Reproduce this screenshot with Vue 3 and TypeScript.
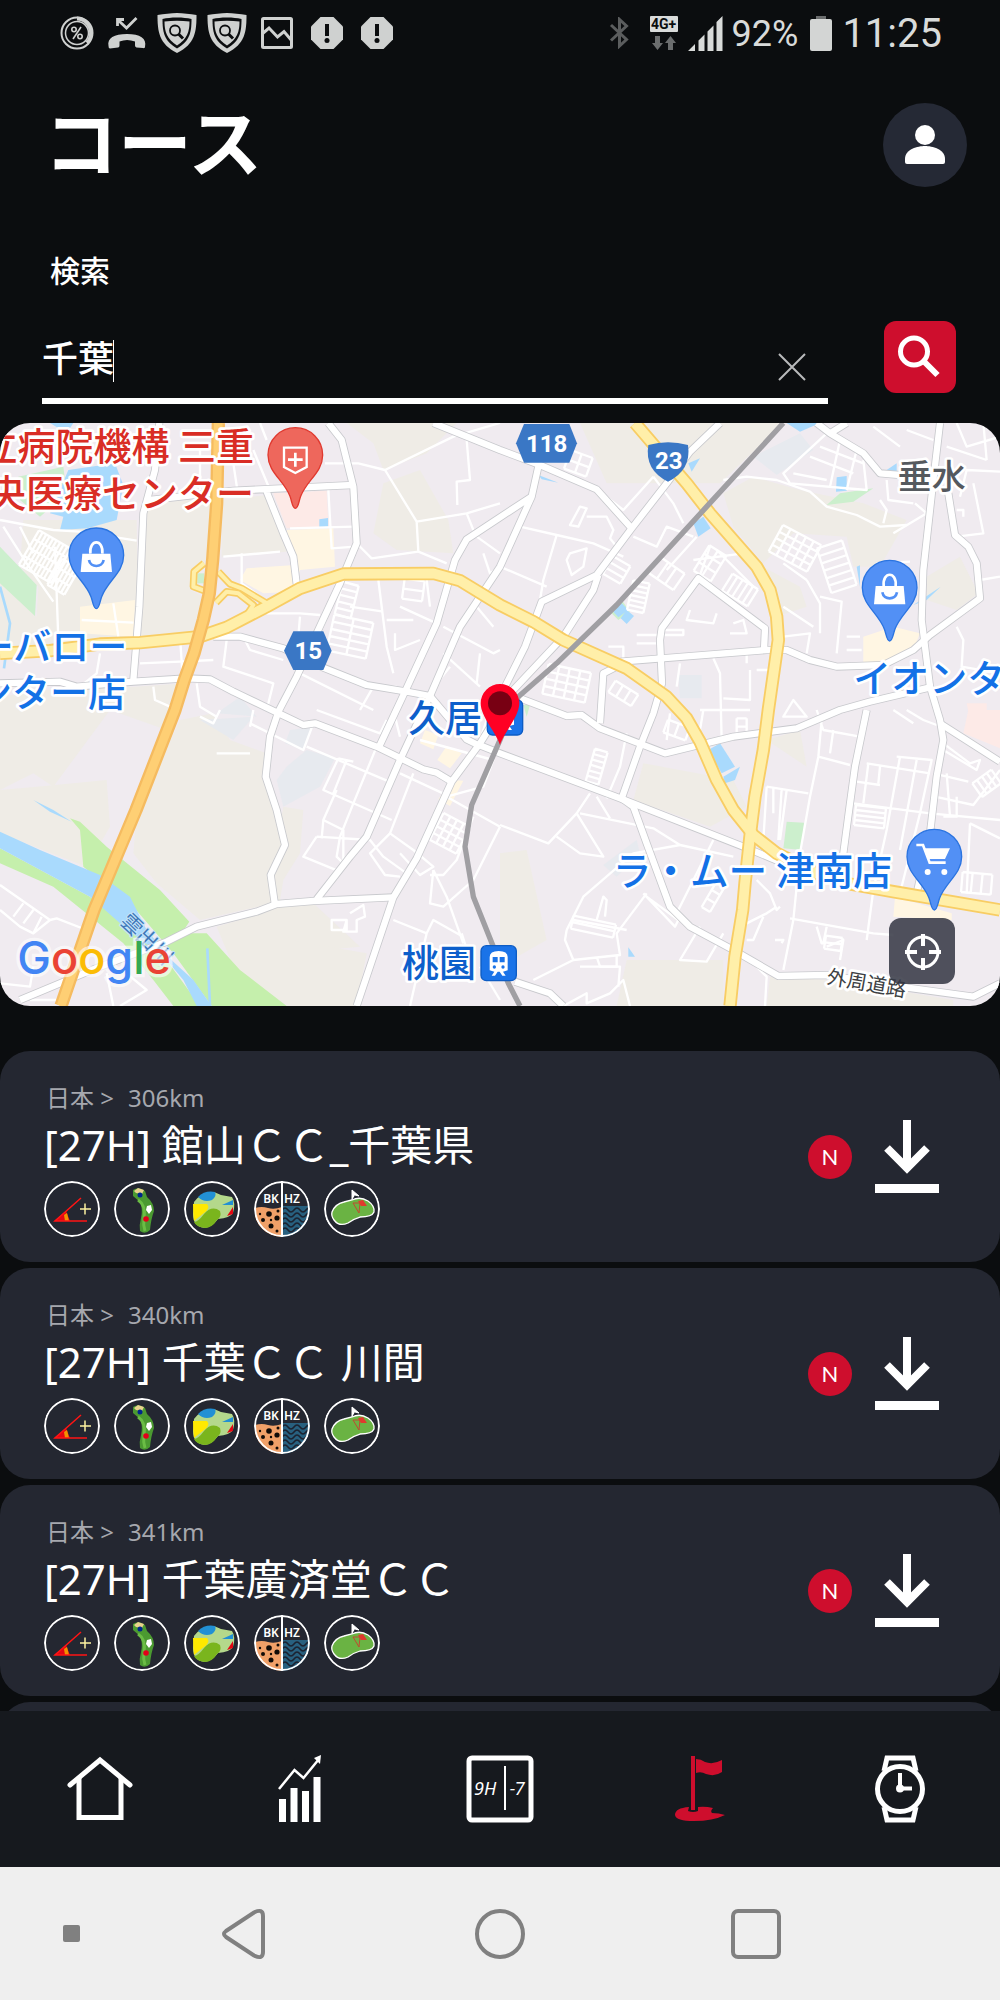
<script setup lang="ts">
import { ref } from 'vue'

interface Course {
  country: string
  distance: string
  name: string
}

interface Label {
  text: string
  x: number
  y: number
  kind: string
  size: number
  rotate?: number
  anchor?: 'start' | 'end'
}

const keyword = ref('千葉')

const courses: Course[] = [
  { country: '日本', distance: '306km', name: '[27H] 館山ＣＣ_千葉県' },
  { country: '日本', distance: '340km', name: '[27H] 千葉ＣＣ 川間' },
  { country: '日本', distance: '341km', name: '[27H] 千葉廣済堂ＣＣ' },
]

// A small block of parallel residential streets, turned around its centre.
function block(cx: number, cy: number, w: number, h: number, angle: number, cols: number, rows: number): string {
  const a = (angle * Math.PI) / 180
  const at = (x: number, y: number) =>
    `${Math.round(cx + x * Math.cos(a) - y * Math.sin(a))} ${Math.round(cy + x * Math.sin(a) + y * Math.cos(a))}`
  let d = ''
  for (let i = 0; i <= cols; i++) {
    const x = -w / 2 + (w * i) / cols
    d += `M${at(x, -h / 2)}L${at(x, h / 2)}`
  }
  for (let j = 0; j <= rows; j++) {
    const y = -h / 2 + (h * j) / rows
    d += `M${at(-w / 2, y)}L${at(w / 2, y)}`
  }
  return d
}

const fields: string[] = [
  'M70 300H410L415 660L0 700V480L110 590L115 500L60 440Z',
  'M440 250L640 235L628 420L570 450V510L610 530L590 640L420 650Z',
  'M665 240L800 225L850 350L860 395L665 410Z',
  'M1040 9H1370L1280 100L1150 150L1120 70Z',
  'M1150 190L1260 150L1345 300L1360 400L1190 390L1120 340Z',
  'M1740 9H2350L2160 190H1820Z',
  'M2170 220L2260 170L2400 210L2590 250L2720 300L2640 440H2560L2540 350L2380 340L2290 430L2200 320Z',
  'M2780 470L2880 410L2935 520L2870 570L2780 540Z',
  'M0 830L200 800L400 800L560 790L500 930L330 870L160 1100L100 1060L0 1110Z',
  'M540 900L640 880L690 960L800 1000V1080L850 1280L810 1370L820 1450L600 1500L470 1390L400 1300L410 1180Z',
  'M0 1110L110 1100L320 1080L330 1220L260 1340L0 1240Z',
  'M850 1160L910 1170L900 1300L850 1380L840 1440L940 1450L1080 1580L870 1600L780 1560Z',
  'M650 1520L820 1470L870 1560L1100 1600L1070 1758H860L700 1640Z',
  'M1500 1300L1580 1290L1640 1560L1500 1640Z',
  'M1930 1030L2200 1080L2240 1160L2130 1220L1900 1140Z',
  'M1880 1620H2170V1758H1850Z',
  'M2310 1670L2500 1680L2860 1740V1758H2300Z',
  'M2300 960L2400 930L2420 1040Z',
  'M2270 430L2400 500L2420 560L2330 590Z',
]

const parks: string[] = [
  'M55 170L190 140L200 220L120 290L60 240Z',
  'M0 380L110 495L105 588L0 490Z',
  'M2480 255L2520 220L2620 205L2560 245Z',
  'M1830 575L1865 540L1890 575L1855 600Z',
  'M2360 1205L2412 1208L2405 1290L2350 1285Z',
  'M1570 855H1590L1580 890Z',
  'M592 460H612V490H592Z',
]

const banks: string[] = [
  'M210 1195L240 1205L320 1280L480 1410L568 1505L545 1540L620 1540L720 1650L860 1758H635L520 1600L400 1460L250 1340L240 1230Z',
  'M0 1285L270 1430L500 1620L600 1758H520L460 1680L370 1570L160 1400L0 1330Z',
]

const waters: string[] = [
  'M0 1235L120 1290L300 1365L390 1430L440 1530L520 1625L580 1680L635 1758H590L550 1680L500 1620L360 1510L270 1430L0 1285Z',
  'M205 150L345 130L370 195L350 300L262 325L180 330L190 290L150 280Z',
  'M150 9H220L200 40Z',
  'M958 298L984 294V320L958 322Z',
  'M2080 310L2110 290L2132 325L2095 350Z',
  'M2360 9H2460L2400 35Z',
  'M2510 172L2540 168V212L2508 215Z',
  'M2065 130L2100 115L2075 155Z',
  'M1840 575L1865 550L1885 570L1855 592Z',
  'M1862 595L1880 570L1902 588L1880 612Z',
  'M2125 990L2160 970L2205 1040L2165 1060Z',
  'M2170 1070L2220 1040L2205 1080L2175 1090Z',
  'M1885 1582L1905 1610H1885Z',
  'M2740 555L2822 500L2780 540Z',
  'M2570 440L2580 436V500Z',
  'M2660 150L2690 130V155Z',
  'M1615 165L1675 188L1625 178Z',
  'M100 1140L160 1170L215 1205L150 1175Z',
]

const shops: string[] = [
  'M860 330L1000 325L1005 440L900 450L880 515L790 520L720 480L740 445L885 435Z',
  'M240 560L405 540L400 650L240 640Z',
  'M2590 650L2680 620L2760 640L2740 690L2650 735H2590Z',
  'M1275 930L1315 945L1300 988L1260 970Z',
  'M1340 978L1385 1000L1350 1045L1312 1020Z',
  'M1355 1080L1390 1082L1350 1158L1315 1138Z',
  'M2685 1430L2855 1480V1500L2680 1490Z',
]

const grounds: string[] = [
  'M600 900L760 890L700 960Z',
  'M870 930L940 920L910 990L855 970Z',
  'M860 1040L920 990L1005 1015L960 1100L850 1160L830 1080Z',
  'M2260 110L2400 40L2440 90L2330 165Z',
  'M2035 765H2105V835H2040Z',
  'M1810 1335L1910 1260L1920 1300L1850 1370Z',
  'M650 880L720 830L770 890Z',
]

const clinics: string[] = ['M820 220L980 212L985 320L860 325Z', 'M2905 870H3000V985L2890 940Z', 'M2900 850H2960V900H2910Z']

const streets: string[] = [
  'M0 300L160 330L240 335L410 362M10 320L80 430L160 545M60 320L100 400M165 380L175 660M245 600L400 608M340 550L355 650',
  'M300 700L290 760L240 800M540 650L548 770M420 730L540 725L640 720M460 800L465 840L510 860M590 790L600 860L650 890',
  'M670 410L840 395M725 400V490L780 530M700 130L712 210M760 90L810 210M600 90V240M780 9L800 60',
  'M975 130H1075L1155 150L1250 305L1255 395L1115 415L1075 375M1155 150L1360 50L1500 9M1250 305L1400 280L1500 250',
  'M985 210L995 385L1065 380M870 325L1060 320M1400 60L1410 180L1370 185L1372 255M1400 280L1420 330M1255 395L1340 430',
  'M1135 480L1160 680L1180 760M1050 560L1150 575M1020 500L960 640M1280 480L1290 560M1200 560L1310 610M1160 600L1240 600M1185 640V690L1260 660',
  'M800 580H900L960 585M900 590L895 650L880 700M730 650L750 690L850 720M680 660L670 740L820 790L800 870M900 760L1120 870M1120 800L1080 870M1150 800L1190 800',
  'M1330 620L1480 700L1500 690M1430 560L1480 620M1440 700L1430 790M1330 700L1440 800M1350 740L1310 790L1290 825M1430 350L1500 400M1450 400L1470 460L1500 440',
  'M1560 320L1670 345L1780 370L1870 410M1670 345L1630 480L1620 540M1500 440L1640 500M1700 420L1710 400L1760 385L1750 440L1715 465Z',
  'M1740 260L1760 265L1735 320L1710 315ZM1760 290H1820L1840 330L1830 355L1850 380M1790 208L1870 270L1960 170M1960 170L2020 250L2050 310M1900 350L1970 380L2000 320L2080 350',
  'M2170 180L2240 170L2330 180L2430 215L2480 260L2570 285L2640 320L2720 315M2000 450L2090 350M2080 420L2230 400M2150 390L2260 500M2130 380L2100 465',
  'M2630 430L2730 425M2640 240L2660 270L2650 310M2660 180L2665 240L2740 250M2880 230L2900 150L3000 155M2920 190L2950 340L2870 350M2940 480L3000 470M2745 250L2780 280L2680 340M2870 270H2890V290',
  'M2420 480L2460 550V640M2420 480L2350 430M2460 530L2525 545L2510 700M2350 560L2440 620M2350 650L2430 640L2420 700M2540 650H2580M2540 690H2585M2870 620L2890 660L2885 740L3000 760',
  'M2070 570L2060 600L2140 610L2150 580M2190 640H2240L2230 600L2200 610M1910 645H2050V630H1990M1910 670H1980M1825 680H1870V730M2040 730L2030 800',
  'M2140 715L2160 760L2165 960M2100 870H2250M2110 870L2100 930M2010 880L2000 960M2250 750V840L2170 835M2270 750L2310 750M2240 690V730',
  'M2350 890L2380 840L2420 890ZM2450 870L2470 930L2580 950M2465 900L2455 1010L2430 1130L2400 1300L2380 1500L2350 1650M2455 1010L2550 1035M2490 1000L2500 930',
  'M2300 1100L2425 1120M2300 1100L2290 1260M2320 1100V1180M2345 1105L2335 1260M2360 1110L2340 1260M2570 1085L2640 1095M2600 1030L2790 1060M2605 1030L2590 1150M2640 1040L2635 1090',
  'M2690 1010L2795 1020L2760 1180L2730 1300L2700 1420M2700 1010L2660 1230L2620 1410M2750 1020L2700 1290M2560 1150L2790 1180L3000 1200M2805 1130L2920 1155L3000 1050M2910 1210L3000 1255M2910 1210L2900 1420',
  'M2720 870L2770 900L2810 915M2830 970L2910 1030L2940 1020L2930 1050L2830 990M2680 870L2740 910M2800 1060L2905 1085M2840 1060L2850 1190M2870 1130V1190H2830',
  'M2370 1495L2620 1540L2680 1545M2450 1520L2465 1570H2470L2480 1520M2480 1580L2530 1560L2520 1620M2325 1560H2350L2345 1570M2240 1510L2300 1480L2330 1460M2270 1380L2310 1420L2330 1470L2340 1460M2290 1490L2260 1560H2240M2620 1410L2600 1560',
  'M1500 1215L1645 1270L1730 1180L1770 1120M1670 1250L1740 1300L1810 1310L1730 1180M1740 1180L1960 1225L2040 1275L2200 1310M1790 1130L1830 1195M1880 940L1860 1040L1820 1135M2140 1260L2100 1340L2030 1480',
  'M1700 1530L1750 1430L1900 1300L2040 1275M1720 1500L1880 1530M1700 1530L1695 1560L1720 1620L1860 1605L1850 1540L1940 1420M1790 1610L1800 1640H1850V1605M1930 1420L2025 1520L2035 1500L1940 1430',
  'M1790 1500L1810 1430L1820 1440L1815 1490M2100 1520L2040 1620L2120 1625L2170 1540M2270 1640L2300 1670L2295 1758M1600 1680L1720 1620M1690 1758L1760 1720V1750L1830 1720L1870 1680L1890 1758M1740 1640L1860 1640L1855 1700',
  'M650 1000H750M750 910L910 990L940 910M760 870L750 920M600 890L640 910L660 870M950 870L1140 940L1160 900M920 980L1180 1090M1180 870L1200 950M1130 980L1060 1150L1020 1250L1010 1310L1030 1330',
  'M1015 1015L970 1110L1175 1200M1015 1015L1060 1025M1010 1110L970 1200L965 1255M1000 1120L1040 1020M1200 1060L1350 1130M1240 1060L1170 1240L1240 1290L1300 1340L1260 1365L1200 1300',
  'M950 1250L1110 1260L1150 1310L1220 1360M950 1250L910 1310L1020 1355M1170 1240L1110 1300L1155 1365L1200 1370M970 1200L1030 1230V1320M1260 960L1480 1020L1450 1100L1340 1130L1500 1220M1470 870L1440 960',
  'M1290 1365H1330L1370 1320L1420 1190M1300 1350L1340 1430L1390 1570M1300 1350L1290 1450L1330 1460L1420 1380L1500 1220M1180 1500L1280 1540L1300 1500L1380 1545M1280 1540L1230 1758M1440 1640L1500 1740',
  'M995 1500H1040V1530H995ZM1050 1480L1090 1455L1095 1490L1070 1500V1535H1030L1040 1500M1385 1540L1420 1650',
  'M0 1395L150 1500L170 1495L260 1530M0 1470L60 1520L100 1540L150 1500M40 1490L70 1450M70 1510L100 1470M100 1540L125 1490M0 1690L90 1700L100 1640M320 1660L340 1758M90 1740H180M360 1758L440 1710L380 1660',
  'M2480 40L2350 160L2370 190L2600 210L2590 120M2380 160L2480 180M2430 110L2560 160M2460 80L2590 130M2490 200L2520 60M2540 210L2570 90M2620 20L2700 80M2800 60L2720 30M2840 80L2960 120M2870 9L2900 80L3000 50M2950 9L2960 120',
  block(135, 410, 110, 120, 30, 9, 4),
  block(190, 470, 60, 90, 30, 5, 3),
  block(1050, 650, 120, 110, 12, 2, 5),
  block(1040, 540, 50, 100, 14, 1, 5),
  block(1240, 510, 60, 60, 8, 1, 2),
  block(1735, 130, 70, 60, 20, 2, 2),
  block(2385, 385, 130, 90, 28, 5, 4),
  block(2510, 440, 80, 140, -18, 1, 6),
  block(2220, 510, 90, 60, 32, 5, 1),
  block(2130, 430, 60, 90, 32, 2, 3),
  block(1915, 530, 50, 90, 12, 1, 6),
  block(2000, 460, 90, 60, 35, 3, 1),
  block(1850, 450, 60, 60, 30, 1, 3),
  block(1700, 790, 130, 90, 12, 4, 4),
  block(1870, 820, 80, 40, 32, 3, 1),
  block(1790, 1040, 40, 100, 16, 1, 6),
  block(2140, 1430, 30, 90, 30, 1, 3),
  block(2610, 1190, 90, 60, 6, 1, 4),
  block(1350, 1240, 90, 90, 28, 4, 4),
  block(1780, 1520, 130, 40, 12, 1, 2),
  block(2225, 920, 30, 50, 0, 1, 2),
  block(2030, 930, 70, 40, 20, 2, 1),
  block(2500, 1570, 50, 40, 8, 1, 2),
  block(2960, 1090, 70, 50, -35, 4, 1),
  block(2930, 1390, 90, 60, 5, 3, 1),
]

const mainRoads: string[] = [
  'M478 9L465 150L430 280L418 560L400 780',
  'M0 790L180 785L230 800L400 785L560 775L630 778L700 815L830 877L910 915L945 910L1130 980L1270 1048L1310 1058L1355 1085',
  'M640 650H720L850 685L975 745L1100 795L1220 815L1290 828L1400 958L1440 978',
  'M450 240L700 212L1060 195M800 215L850 340L880 410L890 492',
  'M985 9L1025 60L1060 200L1070 370L1020 490L950 640L890 770L835 875L810 950L797 1070L830 1170L855 1275L812 1365L825 1455',
  'M1300 9L1500 90L1620 135L1790 208L1895 325',
  'M1615 140L1595 230L1500 440L1380 620L1290 828L1200 1020L1100 1250L1050 1310L950 1438',
  'M1595 230L1500 292L1400 358L1365 420L1310 610L1215 815L1135 985',
  'M2160 9L2070 95L2000 190L1895 325L1790 465L1625 545L1575 680L1515 800',
  'M1795 465L1780 510L1690 650L1540 810L1440 970L1355 1085L1250 1315L1180 1432L1070 1758',
  'M1430 972L1500 1000L1860 1135L2230 1280L2350 1330',
  'M60 1740L300 1640L500 1565L590 1520L770 1475L830 1452L940 1443L1180 1432',
  'M1560 835L1700 888L1745 885L1800 925L1995 1000L2200 950L2390 925L2520 870L2610 845L2800 800',
  'M2292 690L2295 625L2095 475L1985 625L1980 660L1986 790L1960 880L1920 980L1865 1135L1900 1160L1940 1270L2010 1460L2070 1520L2200 1590L2335 1668L2480 1665L2700 1700L2920 1730L3000 1690',
  'M1860 725L2300 690H2360L2430 720L2510 740L2650 735L2740 690L2790 645L2940 535L2930 430L2905 380L2865 345L2845 220',
  'M2820 9L2800 180L2770 450L2765 600L2790 800L2820 900L2830 960L2810 1070L2790 1240L2750 1420',
  'M2450 9L2490 40L2590 100L2640 160L2700 165M2490 40L2540 9',
  'M2600 870L2565 1040L2550 1150L2530 1300M2820 910L3000 1025',
  'M1800 910L1810 760L1860 735M1545 1685L1650 1720L1690 1758',
]

const yellowRoads: string[] = [
  'M0 700L150 692L300 672L420 668L600 650L680 622L800 560L900 505L1030 462L1300 460L1380 482L1500 555L1600 605L1690 660L1880 745L2000 830L2060 895L2100 965L2150 1080L2200 1170L2260 1245L2330 1300L2450 1360L2550 1392L2680 1415L3000 1470',
  'M1905 9L2060 190L2130 280L2270 440L2310 510L2330 590L2335 660L2305 870L2290 990L2265 1130L2250 1250L2235 1390L2228 1470L2205 1610L2190 1758',
]

const ramps: string[] = ['M612 430L582 455L580 500L612 512', 'M655 455L690 492L725 505L800 550', 'M648 548L680 515L715 520L760 555L740 585L640 635']

const highway = 'M655 9L650 250L638 420L628 520L610 600L582 700L553 780L525 870L408 1170L282 1470L183 1758'
const railway = 'M2350 9L2120 260L1850 555L1670 730L1555 830L1500 960L1415 1155L1395 1280L1420 1430L1480 1580L1525 1690L1560 1758'
const pinShape =
  'M0 160C-9 160-10 140-16 124C-34 76-82 52-82 0A82 82 0 1 1 82 0C82 52 34 76 16 124C10 140 9 160 0 160Z'

const labels: Label[] = [
  { text: '立病院機構 三重', x: 762, y: 121, kind: 'red', size: 114, anchor: 'end' },
  { text: '央医療センター', x: 762, y: 261, kind: 'red', size: 114, anchor: 'end' },
  { text: 'ーバロー', x: 382, y: 720, kind: 'blue', size: 114, anchor: 'end' },
  { text: 'ンター店', x: 378, y: 859, kind: 'blue', size: 114, anchor: 'end' },
  { text: '久居', x: 1224, y: 937, kind: 'navy', size: 111 },
  { text: '桃園', x: 1206, y: 1672, kind: 'navy', size: 111 },
  { text: '垂水', x: 2693, y: 206, kind: 'grey', size: 102 },
  { text: 'イオンタ', x: 2560, y: 817, kind: 'blue', size: 114 },
  { text: 'ラ・ムー 津南店', x: 1838, y: 1395, kind: 'blue', size: 116 },
  { text: '外周道路', x: 2478, y: 1690, kind: 'dark', size: 60, rotate: 10 },
  { text: '雲出川', x: 358, y: 1508, kind: 'river', size: 63, rotate: 44 },
]
</script>

<template>
  <div class="app">
    <div class="status">
      <div class="status-left">
        <svg class="s-icon" viewBox="0 0 42 42">
          <circle cx="21" cy="21" r="15.500" fill="none" stroke="#cfd1d0" stroke-width="2" />
          <path d="M21 6.500A14.500 14.500 0 0 1 31 31" fill="none" stroke="#cfd1d0" stroke-width="4" />
          <circle cx="21" cy="21" r="11.500" fill="none" stroke="#cfd1d0" stroke-width="1.500" />
          <circle cx="18" cy="17.500" r="2.200" fill="none" stroke="#cfd1d0" stroke-width="1.600" />
          <circle cx="24" cy="24.500" r="2.200" fill="none" stroke="#cfd1d0" stroke-width="1.600" />
          <path d="M25 15L17 27" stroke="#cfd1d0" stroke-width="1.600" />
        </svg>
        <svg class="s-icon" viewBox="0 0 42 42">
          <path d="M11.500 14V7.500H18M12.500 8.500L20.500 16L30.500 6" fill="none" stroke="#cfd1d0" stroke-width="2.800" />
          <path d="M2.500 34C1 26 8 22 21 22S41 26 39 35Q39 36.500 37 36L30.500 35.500Q29 35 29 33.500V29.500Q21 26.500 13.500 29.500V33.500Q13.500 35.500 12 35.500L4 36.500Q2.500 36.500 2.500 34Z" fill="#cfd1d0" />
        </svg>
        <svg v-for="n in 2" :key="n" class="s-icon" viewBox="0 0 42 42">
          <path d="M21 1C15 1 8 2 1.500 3C1.500 20 3 32 21 41C39 32 40.500 20 40.500 3C34 2 27 1 21 1Z" fill="#cfd1d0" />
          <path d="M21 5.500C15 5.500 11 6 6.500 7C6.500 20 8 29 21 36.500C34 29 35.500 20 35.500 7C31 6 27 5.500 21 5.500Z" fill="#0b0d0f" />
          <path d="M8.500 9.500Q21 8 33.500 9.500C33.500 20 31 27 21 33.500C11 27 8.500 20 8.500 9.500Z" fill="#cfd1d0" />
          <circle cx="19" cy="18.500" r="5" fill="none" stroke="#0b0d0f" stroke-width="1.800" />
          <path d="M22.500 22L27 26.500" stroke="#0b0d0f" stroke-width="3" />
        </svg>
        <svg class="s-icon" viewBox="0 0 42 42">
          <rect x="6.500" y="6.500" width="29" height="29" rx="1" fill="none" stroke="#cfd1d0" stroke-width="3" />
          <path d="M6 22L13 16L21.500 25L28 19.500L36 29" fill="none" stroke="#cfd1d0" stroke-width="3" />
        </svg>
        <svg v-for="n in 2" :key="'a' + n" class="s-icon" viewBox="0 0 42 42">
          <path d="M14.500 5H27.500L37 14.500V27.500L27.500 37H14.500L5 27.500V14.500Z" fill="#cfd1d0" />
          <path d="M19 12H23V24H19Z" fill="#0b0d0f" />
          <circle cx="21" cy="28.500" r="2.500" fill="#0b0d0f" />
        </svg>
      </div>
      <div class="status-right">
        <svg class="bt" viewBox="0 0 20 32">
          <path d="M2 8L17.500 22.500L10.500 29V2.500L17.500 9L2 23.500" fill="none" stroke="#5b5d5e" stroke-width="3" />
        </svg>
        <div class="net">
          <span class="net-tag">4G+</span>
          <svg class="net-arrows" viewBox="0 0 28 14">
            <path d="M5 0H10V7H13L7.500 14L2 7H5Z" fill="#6b6d6e" />
            <path d="M18 14H23V7H26L20.500 0L15 7H18Z" fill="#6b6d6e" />
          </svg>
        </div>
        <svg class="signal" viewBox="0 0 36 36">
          <path d="M0 36L7 29V36ZM10.500 25.500L16.500 19.500V36H10.500ZM19.500 16.500L25.500 10.500V36H19.500ZM28.500 7L34.500 1V36H28.500Z" fill="#d9dbda" />
        </svg>
        <span class="percent">92%</span>
        <svg class="battery" viewBox="0 0 22 36">
          <path d="M6 1H16V5H6Z" fill="#6b6d6e" />
          <rect y="4" width="22" height="32" rx="2" fill="#d3d5d4" />
        </svg>
        <span class="clock">11:25</span>
      </div>
    </div>

    <header class="header">
      <h1>コース</h1>
      <button class="avatar" type="button" aria-label="プロフィール">
        <svg viewBox="0 0 84 84">
          <circle cx="42" cy="32" r="10" fill="#fff" />
          <path d="M22 56C22 46 35 43 42 43S62 46 62 56V59Q62 61 60 61H24Q22 61 22 59Z" fill="#fff" />
        </svg>
      </button>
    </header>

    <form class="search" @submit.prevent>
      <label for="keyword">検索</label>
      <div class="search-row">
        <div class="field">
          <input id="keyword" v-model="keyword" type="text" autocomplete="off" />
          <span class="caret"></span>
          <button class="clear" type="button" aria-label="クリア">
            <svg viewBox="0 0 28 28"><path d="M1 1L27 27M27 1L1 27" stroke="#b9babb" stroke-width="2" /></svg>
          </button>
        </div>
        <button class="go" type="submit" aria-label="検索する">
          <svg viewBox="0 0 72 72">
            <circle cx="30" cy="30.500" r="13.500" fill="none" stroke="#fff" stroke-width="5" />
            <path d="M39.500 40L53.500 54" stroke="#fff" stroke-width="6" />
          </svg>
        </button>
      </div>
    </form>

    <section class="map">
      <svg class="map-canvas" viewBox="0 9 3000 1749" preserveAspectRatio="xMidYMid slice">
        <rect x="0" y="0" width="3000" height="1760" fill="#f0ebf0" />
        <path v-for="(d, i) in fields" :key="'f' + i" :d="d" fill="#efece6" />
        <path v-for="(d, i) in grounds" :key="'g' + i" :d="d" fill="#e7eaef" />
        <path v-for="(d, i) in shops" :key="'s' + i" :d="d" fill="#fff6e3" />
        <path v-for="(d, i) in clinics" :key="'c' + i" :d="d" fill="#fdeae7" />
        <path v-for="(d, i) in parks" :key="'p' + i" :d="d" fill="#ccefcd" />
        <path v-for="(d, i) in banks" :key="'b' + i" :d="d" fill="#c5efac" />
        <path v-for="(d, i) in waters" :key="'w' + i" :d="d" fill="#a9dafd" />
        <path d="M0 500L30 610L12 745M622 1585L630 1758" class="line brook" />
        <path v-for="(d, i) in streets" :key="'m' + i" :d="d" class="line street" />
        <path v-for="(d, i) in mainRoads" :key="'rc' + i" :d="d" class="line road-edge" />
        <path v-for="(d, i) in mainRoads" :key="'r' + i" :d="d" class="line road" />
        <path v-for="(d, i) in ramps" :key="'jc' + i" :d="d" class="line ramp-edge" />
        <path v-for="(d, i) in yellowRoads" :key="'yc' + i" :d="d" class="line yellow-edge" />
        <path v-for="(d, i) in yellowRoads" :key="'y' + i" :d="d" class="line yellow" />
        <path v-for="(d, i) in ramps" :key="'j' + i" :d="d" class="line ramp" />
        <path :d="highway" class="line highway-edge" />
        <path :d="highway" class="line highway" />
        <path :d="railway" class="line rail" />

        <g fill="#3a77c5">
          <path d="M1572 12H1708L1731 70L1708 128H1572L1548 70Z" />
          <path d="M880 634H970L995 692L970 750H880L852 692Z" />
          <path d="M1945 75Q2004 58 2064 75Q2075 150 2004 185Q1933 150 1945 75Z" />
        </g>
        <g class="shield">
          <text x="1640" y="96">118</text>
          <text x="925" y="718">15</text>
          <text x="2006" y="147">23</text>
        </g>

        <g class="labels">
          <text
            v-for="l in labels"
            :key="l.text"
            :class="l.kind"
            :x="l.x"
            :y="l.y"
            :font-size="l.size"
            :text-anchor="l.anchor ?? 'start'"
            :transform="l.rotate ? `rotate(${l.rotate} ${l.x} ${l.y})` : undefined"
          >{{ l.text }}</text>
        </g>

        <g transform="translate(886 105)">
          <path :d="pinShape" fill="#ee675c" stroke="#e0392f" stroke-width="4" />
          <path d="M-34-22H34V36L0 54L-34 36Z" fill="none" stroke="#fff" stroke-width="7" />
          <path d="M-22 14H22M0-7V35" stroke="#fff" stroke-width="8" />
        </g>
        <g v-for="p in [[289, 406], [2669, 503]]" :key="p[0]" :transform="`translate(${p[0]} ${p[1]})`">
          <path :d="pinShape" fill="#5290f5" stroke="#2b74e0" stroke-width="4" />
          <path d="M-42-5H42L47 50H-47Z" fill="#fff" />
          <path d="M-18-5C-22-50 22-50 18-5" fill="none" stroke="#fff" stroke-width="8" />
          <path d="M-22 14C-18 38 18 38 22 14" fill="none" stroke="#5290f5" stroke-width="8" />
        </g>
        <g transform="translate(2803 1310)">
          <path :d="pinShape" fill="#5290f5" stroke="#2b74e0" stroke-width="4" />
          <path d="M-54-35H-34L-14 18H34" fill="none" stroke="#fff" stroke-width="8" />
          <path d="M-32-25H47L32 7H-18Z" fill="#fff" />
          <circle cx="-20" cy="46" r="9" fill="#fff" />
          <circle cx="30" cy="46" r="9" fill="#fff" />
        </g>
        <g v-for="p in [[1462, 840], [1443, 1577]]" :key="'st' + p[0]" :transform="`translate(${p[0]} ${p[1]})`">
          <rect width="106" height="105" rx="16" fill="#1a73e8" stroke="#0d5cc4" stroke-width="4" />
          <path d="M26 74V34Q26 16 53 16T80 34V74L66 78L74 90H64L56 78H50L42 90H32L40 78Z" fill="#fff" />
          <path d="M35 34H50V50H35ZM56 34H71V50H56Z" fill="#1a73e8" />
          <circle cx="40" cy="64" r="5" fill="#1a73e8" />
          <circle cx="66" cy="64" r="5" fill="#1a73e8" />
        </g>
        <path d="M1500 975C1490 940 1442 890 1442 850A58 58 0 0 1 1558 850C1558 890 1510 940 1500 975Z" fill="#ff0024" />
        <circle cx="1500" cy="850" r="36" fill="#780013" />
        <text class="brand" x="52" y="1662"><tspan fill="#4285f4">G</tspan><tspan fill="#ea4335">o</tspan><tspan fill="#fbbc05">o</tspan><tspan fill="#4285f4">g</tspan><tspan fill="#34a853">l</tspan><tspan fill="#ea4335">e</tspan></text>
      </svg>
      <button class="locate" type="button" aria-label="現在地">
        <svg viewBox="0 0 66 66">
          <circle cx="34" cy="34" r="15" fill="none" stroke="#fff" stroke-width="3" />
          <path d="M34 16V28M34 40V52M16 34H28M40 34H52" stroke="#fff" stroke-width="4" />
        </svg>
      </button>
    </section>

    <main class="list">
      <article v-for="c in courses" :key="c.name" class="card">
        <div class="info">
          <p class="where"><span>{{ c.country }} &gt;</span><span>{{ c.distance }}</span></p>
          <h2>{{ c.name }}</h2>
          <div class="features">
            <svg viewBox="0 0 56 56">
              <path d="M10 40L22 30L26 40Z" fill="#e30613" />
              <path d="M20 34L23 32L25 40H21Z" fill="#f39200" />
              <path d="M37 17L11 40H43" fill="none" stroke="#ff1414" stroke-width="1.500" />
              <path d="M41 22.500V33.500M36 28H47" stroke="#fdf3a0" stroke-width="1.500" />
              <circle cx="28" cy="28" r="27" class="ring" />
            </svg>
            <svg viewBox="0 0 56 56">
              <path d="M19 9Q25 5 31 10L33 16Q40 22 40 30Q37 38 36 49Q31 54 26 50Q25 44 27 37Q29 28 26 21L19 15Z" fill="#4b9a31" />
              <path d="M24 19Q32 24 30 37Q29 44 31 50" fill="none" stroke="#6bbd45" stroke-width="3" />
              <path d="M20 10L24 7L30 9L28 13L22 12Z" fill="#e9d28d" />
              <path d="M33 25L37 24L38 29L35 33L32 29Z" fill="#fff" />
              <circle cx="26" cy="14" r="2.500" fill="#00268c" />
              <circle cx="32" cy="38" r="2.800" fill="#e2001a" />
              <circle cx="28" cy="28" r="27" class="ring" />
            </svg>
            <svg viewBox="0 0 56 56">
              <path d="M10 21Q16 12 30 11L37 14L48 16Q52 22 49 32Q46 37 34 38Q28 46 21 47Q9 46 9 33Z" fill="#b4d88b" />
              <path d="M14 16Q21 9 31 11Q33 15 28 19Q20 22 14 16Z" fill="#2290d4" />
              <path d="M9 23H23Q27 27 20 32L10 40Q9 32 9 23Z" fill="#ffe900" />
              <path d="M10 41Q14 41 20 33Q28 24 36 30Q38 36 33 39Q28 47 21 47Q12 46 10 41Z" fill="#7ab51d" />
              <path d="M38 24L49 19V24H41Z" fill="#2290d4" />
              <path d="M43 35L49 26V33Z" fill="#e30613" />
              <circle cx="28" cy="28" r="27" class="ring" />
            </svg>
            <svg viewBox="0 0 56 56">
              <path d="M1 27Q8 25 14 27T28 26V56H1Z" fill="#f0a068" />
              <g fill="#100b08">
                <circle cx="6" cy="33" r="1.200" /><circle cx="15" cy="33" r="2.800" /><circle cx="24" cy="30" r="1.500" />
                <circle cx="9" cy="39" r="2" /><circle cx="17" cy="39" r="1.200" /><circle cx="23" cy="37" r="2.600" />
                <circle cx="17" cy="45" r="2.500" /><circle cx="23" cy="50" r="1.500" />
              </g>
              <path d="M28 25H56V56H28Z" fill="#28607f" />
              <path
                d="M28 29Q31 25 34 29T40 29T46 29T52 29T58 29M28 34Q31 30 34 34T40 34T46 34T52 34T58 34M28 39Q31 35 34 39T40 39T46 39T52 39T58 39M28 44Q31 40 34 44T40 44T46 44T52 44T58 44M28 49Q31 45 34 49T40 49T46 49T52 49"
                fill="none" stroke="#1c2230" stroke-width="1.500"
              />
              <path d="M28 0V56" stroke="#fff" stroke-width="2" />
              <text x="17" y="22">BK</text>
              <text x="38" y="22">HZ</text>
              <circle cx="28" cy="28" r="27" class="ring" />
            </svg>
            <svg viewBox="0 0 56 56">
              <path d="M8 31Q11 23 20 21L28 19Q36 15 44 20Q51 25 50 31Q48 36 36 36Q29 38 24 42Q15 46 10 39Q7 35 8 31Z" fill="#6ab343" stroke="#fff" stroke-width="1.300" />
              <path d="M28 19V9L35 15L31 14" fill="#fff" stroke="#fff" stroke-width="1" />
              <path d="M29 22L35 32L36 22Z" fill="none" stroke="#c04a30" stroke-width="1" />
              <path d="M34 20L39 19L43 25L37 25Z" fill="#e03a2e" />
              <circle cx="28" cy="28" r="27" class="ring" />
            </svg>
          </div>
        </div>
        <span class="badge">N</span>
        <button class="download" type="button" aria-label="ダウンロード">
          <svg viewBox="0 0 64 74">
            <path d="M32 0V48M12 28L32 48L52 28" fill="none" stroke="#fff" stroke-width="8" />
            <path d="M0 64H64V73H0Z" fill="#fff" />
          </svg>
        </button>
      </article>
      <article class="card"></article>
    </main>

    <nav class="tabs">
      <a href="#" aria-label="ホーム">
        <svg viewBox="0 0 70 70">
          <path d="M14 23V63.500H56V23" fill="none" stroke="#fff" stroke-width="5" />
          <path d="M5 31L35 6L65 31" fill="none" stroke="#fff" stroke-width="5" stroke-linecap="round" />
        </svg>
      </a>
      <a href="#" aria-label="統計">
        <svg viewBox="0 0 70 70">
          <path d="M14 45H21V68H14ZM25.500 34H32.500V68H25.500ZM37 37H44V68H37ZM48.500 23H55.500V68H48.500Z" fill="#fff" />
          <path d="M14 35L29.500 16L38.500 24L54 5" fill="none" stroke="#fff" stroke-width="2.500" />
          <path d="M56 1L55 10L49 4Z" fill="#fff" />
        </svg>
      </a>
      <a href="#" aria-label="スコア">
        <svg viewBox="0 0 70 70">
          <rect x="4" y="4" width="62" height="62" rx="3" fill="none" stroke="#fff" stroke-width="5" />
          <path d="M40 12V56" stroke="#fff" stroke-width="2" />
          <text x="9" y="41">9H</text>
          <text x="45" y="41" class="score">-7</text>
        </svg>
      </a>
      <a href="#" aria-label="コース">
        <svg viewBox="0 0 70 70" fill="#ce0e2d">
          <path d="M26 2H30V56H26Z" />
          <path d="M31 5Q36 5 40 8Q48 11 57 6V18Q50 23 41 20Q36 17 31 19Z" />
          <path d="M24 53Q10 54 10 61Q11 67 29 67Q48 67 60 61Q54 59 47 59Q45 57 48 54Q40 52 33 53V57Q28 59 23 57Z" />
        </svg>
      </a>
      <a href="#" aria-label="デバイス">
        <svg viewBox="0 0 70 70" fill="none" stroke="#fff" stroke-width="5">
          <circle cx="35" cy="35" r="22.500" />
          <path d="M19 17L22 4H48L51 17M19 53L22 66H48L51 53" />
          <path d="M35 19V34.500H47" stroke-width="4" />
          <circle cx="35" cy="34.500" r="2" stroke-width="4" />
        </svg>
      </a>
    </nav>

    <div class="system">
      <span class="dot"></span>
      <button type="button" aria-label="戻る">
        <svg viewBox="0 0 52 52"><path d="M8 23L36 4.500Q45 0 45 8V44Q45 52 36 47.500L8 29Q4 26 8 23Z" /></svg>
      </button>
      <button type="button" aria-label="ホーム画面">
        <svg viewBox="0 0 52 52"><circle cx="26" cy="26" r="23" /></svg>
      </button>
      <button type="button" aria-label="履歴">
        <svg viewBox="0 0 52 52"><rect x="3" y="3" width="46" height="46" rx="5" /></svg>
      </button>
    </div>
  </div>
</template>

<style>
body {
  background: #0b0d0f;
}
</style>

<style scoped>
.app {
  display: flex;
  flex-direction: column;
  height: 100vh;
  background: #0b0d0f;
  color: #fff;
  font-family: 'Noto Sans', 'Noto Sans CJK JP', sans-serif;
}
button {
  padding: 0;
  border: 0;
  background: none;
}
button svg {
  display: block;
  width: 100%;
  height: 100%;
}

.status {
  flex: none;
  display: flex;
  justify-content: space-between;
  height: 66px;
  padding: 0 58px 0 56px;
  color: #d9dbda;
  font-family: Roboto, sans-serif;
}
.status-left,
.status-right {
  display: flex;
  align-items: center;
}
.status-left {
  gap: 8px;
}
.s-icon {
  width: 42px;
  height: 42px;
}
.bt {
  width: 20px;
  height: 32px;
  margin-right: 21px;
}
.net {
  display: flex;
  flex-direction: column;
  gap: 4px;
  width: 28px;
  margin-right: 10px;
}
.net-tag {
  height: 16px;
  border-radius: 1px;
  background: #d9dbda;
  color: #0b0d0f;
  font-size: 14px;
  font-weight: 700;
  line-height: 17px;
  text-align: center;
}
.net-arrows {
  width: 28px;
  height: 14px;
}
.signal {
  width: 36px;
  height: 36px;
  margin-right: 8px;
}
.percent {
  padding-top: 2px;
  font-size: 36px;
  line-height: 40px;
}
.battery {
  width: 22px;
  height: 36px;
  margin: 0 10px 0 12px;
}
.clock {
  padding-top: 2px;
  font-size: 40px;
  line-height: 40px;
}

.header {
  flex: none;
  display: flex;
  align-items: center;
  justify-content: space-between;
  height: 158px;
  padding: 0 33px 0 44px;
}
h1 {
  margin: 0;
  padding-bottom: 4px;
  font-size: 74px;
  font-weight: 700;
  line-height: 84px;
}
.avatar {
  width: 84px;
  height: 84px;
  border-radius: 50%;
  background: #252935;
}

.search {
  flex: none;
  padding: 26px 44px 19px 42px;
}
.search label {
  display: block;
  margin: 0 0 29px 8px;
  font-size: 30px;
  font-weight: 500;
  line-height: 42px;
}
.search-row {
  display: flex;
  align-items: flex-start;
  gap: 56px;
}
.field {
  position: relative;
  flex: 1;
  display: flex;
  align-items: center;
  height: 77px;
  border-bottom: 6px solid #fff;
}
.field input {
  flex: 1;
  min-width: 0;
  padding: 0 0 6px;
  border: 0;
  outline: 0;
  background: none;
  color: #fff;
  font: inherit;
  font-size: 36px;
  font-weight: 500;
}
.caret {
  position: absolute;
  left: 71px;
  top: 19px;
  width: 1px;
  height: 42px;
  background: #fff;
}
.clear {
  width: 28px;
  height: 28px;
  margin: 14px 22px 0 0;
}
.go {
  width: 72px;
  height: 72px;
  border-radius: 12px;
  background: #ce0e2d;
}

.map {
  position: relative;
  flex: none;
  aspect-ratio: 1000 / 583;
  margin-bottom: 45px;
  border-radius: 30px;
  overflow: hidden;
}
.map-canvas {
  display: block;
  width: 100%;
  height: 100%;
}
.line {
  fill: none;
  stroke-linejoin: round;
}
.brook {
  stroke: #a9dafd;
  stroke-width: 8;
}
.street {
  stroke: #fff;
  stroke-width: 7;
}
.road-edge {
  stroke: #c8c9cd;
  stroke-width: 24;
}
.road {
  stroke: #fff;
  stroke-width: 19;
}
.yellow-edge {
  stroke: #f8cd64;
  stroke-width: 40;
}
.yellow {
  stroke: #ffefa9;
  stroke-width: 29;
}
.ramp-edge {
  stroke: #f8cd64;
  stroke-width: 22;
}
.ramp {
  stroke: #ffefa9;
  stroke-width: 12;
}
.highway-edge {
  stroke: #f5bb60;
  stroke-width: 40;
}
.highway {
  stroke: #fecf74;
  stroke-width: 26;
}
.rail {
  stroke: #a09fa3;
  stroke-width: 16;
}
.shield {
  fill: #fff;
  font-family: Roboto, sans-serif;
  font-size: 72px;
  font-weight: 700;
  text-anchor: middle;
}
.labels {
  font-family: 'Noto Sans CJK JP', sans-serif;
  font-weight: 500;
  paint-order: stroke;
  stroke: #fff;
  stroke-width: 16;
  stroke-linejoin: round;
}
.labels .red {
  fill: #d92d25;
}
.labels .blue {
  fill: #1371e6;
}
.labels .navy {
  fill: #0d5fcb;
}
.labels .grey {
  fill: #55595e;
}
.labels .dark {
  fill: #3c4043;
  font-weight: 400;
}
.labels .river {
  fill: #3f78b8;
  font-weight: 400;
  stroke: #c4e4fb;
  stroke-width: 6;
}
.brand {
  font-family: Inter, sans-serif;
  font-size: 135px;
  font-weight: 500;
  paint-order: stroke;
  stroke: #fff;
  stroke-opacity: 0.6;
  stroke-width: 20;
}
.locate {
  position: absolute;
  right: 45px;
  bottom: 22px;
  width: 66px;
  height: 66px;
  border-radius: 12px;
  background: rgba(52, 55, 67, 0.86);
}

.list {
  flex: 1;
  min-height: 0;
  display: flex;
  flex-direction: column;
  gap: 6px;
  overflow: hidden;
}
.card {
  flex: none;
  box-sizing: border-box;
  display: flex;
  align-items: center;
  min-height: 211px;
  padding: 0 61px 0 44px;
  border-radius: 30px;
  background: #242731;
}
.info {
  flex: 1;
  min-width: 0;
  padding-top: 4px;
}
.where {
  display: flex;
  gap: 14px;
  margin: 0;
  padding-left: 2px;
  color: #a6a8ae;
  font-size: 24px;
  line-height: 34px;
}
h2 {
  margin: 0 0 6px;
  font-size: 42px;
  font-weight: 400;
  line-height: 60px;
}
.features {
  display: flex;
  gap: 14px;
}
.features svg {
  width: 56px;
  height: 56px;
  border-radius: 50%;
}
.ring {
  fill: none;
  stroke: #fff;
  stroke-width: 2;
}
.features text {
  fill: #fff;
  font-size: 12px;
  font-weight: 600;
  text-anchor: middle;
}
.badge {
  width: 44px;
  height: 44px;
  margin-right: 23px;
  border-radius: 50%;
  background: #ce0e2d;
  font-family: Lato, sans-serif;
  font-size: 22px;
  line-height: 44px;
  text-align: center;
}
.download {
  width: 64px;
  height: 74px;
}

.tabs {
  flex: none;
  display: flex;
  height: 156px;
  background: #16191e;
}
.tabs a {
  flex: 1;
  display: flex;
  align-items: center;
  justify-content: center;
}
.tabs svg {
  width: 70px;
  height: 70px;
}
.tabs text {
  fill: #fff;
  font-size: 18px;
  font-style: italic;
}
.tabs .score {
  font-family: Roboto, sans-serif;
}

.system {
  flex: none;
  display: grid;
  grid-template-columns: 116fr 256fr 256fr 256fr 116fr;
  place-items: center;
  height: 133px;
  background: #efefef;
}
.dot {
  justify-self: end;
  width: 17px;
  height: 17px;
  margin-right: 36px;
  border-radius: 2px;
  background: #808080;
}
.system button {
  width: 52px;
  height: 52px;
}
.system svg {
  fill: none;
  stroke: #808080;
  stroke-width: 4;
}
</style>
